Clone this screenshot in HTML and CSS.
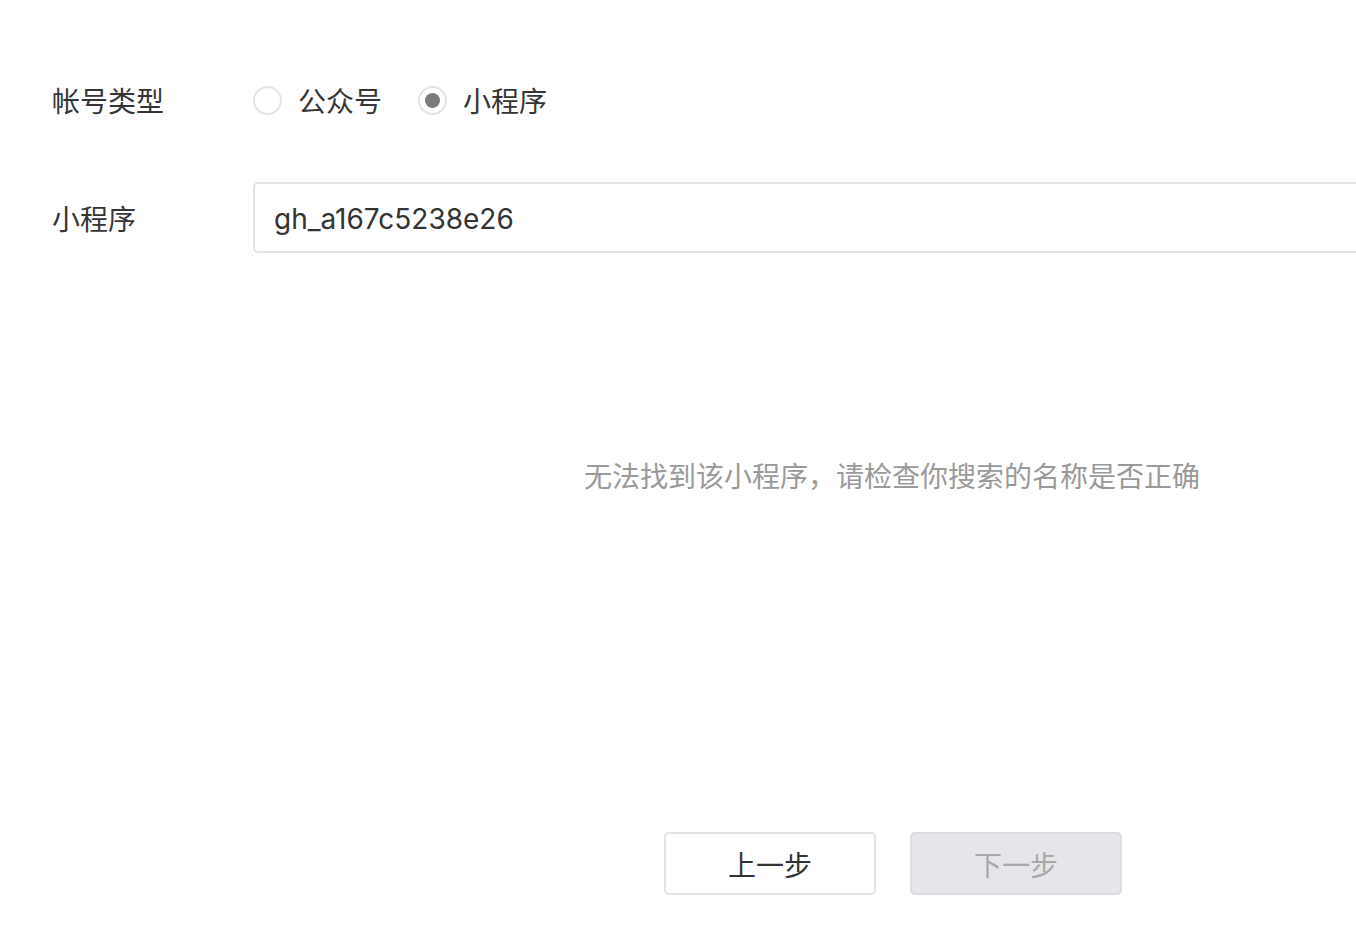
FILE: index.html
```html
<!DOCTYPE html>
<html lang="zh-CN">
<head>
<meta charset="utf-8">
<title>小程序</title>
<link rel="stylesheet" href="styles.css">
</head>
<body>
<div class="page">
  <div class="row row-type">
    <div class="label">帐号类型</div>
    <div class="radios">
      <label class="radio"><span class="dot"></span><span class="rtext">公众号</span></label>
      <label class="radio checked"><span class="dot"></span><span class="rtext">小程序</span></label>
    </div>
  </div>
  <div class="row row-input">
    <div class="label">小程序</div>
    <div class="input">gh_a167c5238e26</div>
  </div>
  <div class="empty">无法找到该小程序，请检查你搜索的名称是否正确</div>
  <div class="actions">
    <button class="btn">上一步</button>
    <button class="btn disabled">下一步</button>
  </div>
</div>
</body>
</html>
```
FILE: styles.css
```css
html, body {
  margin: 0;
  padding: 0;
  background: #fff;
}
body {
  font-family: "Noto Sans CJK SC", "Inter", "Noto Sans", sans-serif;
  color: #353535;
  width: 1356px;
  height: 942px;
  overflow: hidden;
}
.page {
  padding-left: 52px;
  overflow: hidden;
  height: 942px;
}
.row {
  display: flex;
  align-items: center;
}
.label {
  width: 201px;
  font-size: 28px;
  line-height: 40px;
  flex: none;
}
.row-type {
  padding-top: 80px;
  height: 40px;
}
.radios {
  display: flex;
  align-items: center;
  gap: 36px;
}
.radio {
  display: flex;
  align-items: center;
  gap: 16px;
  font-size: 28px;
  line-height: 40px;
}
.dot {
  box-sizing: border-box;
  width: 29px;
  height: 29px;
  border-radius: 50%;
  border: 2px solid #e4e4e6;
  background: #fff;
  display: flex;
  align-items: center;
  justify-content: center;
}
.checked .dot::after {
  content: "";
  width: 15px;
  height: 15px;
  border-radius: 50%;
  background: #7b7b7b;
}
.row-input {
  margin-top: 62px;
}
.input {
  box-sizing: border-box;
  flex: none;
  width: 1200px;
  height: 71px;
  border: 2px solid #e2e5ea;
  border-radius: 5px;
  padding-left: 19px;
  padding-top: 2px;
  font-family: "Inter", "Noto Sans", sans-serif;
  font-size: 28px;
  display: flex;
  align-items: center;
  color: #333;
}
.empty {
  margin-top: 202px;
  padding-left: 532px;
  font-size: 28px;
  line-height: 40px;
  color: #9a9a9a;
}
.actions {
  margin-top: 337px;
  padding-left: 612px;
  display: flex;
  gap: 34px;
}
.btn {
  box-sizing: border-box;
  width: 212px;
  height: 63px;
  border: 2px solid #e3e3e6;
  border-radius: 5px;
  background: #fff;
  font-family: "Noto Sans CJK SC", sans-serif;
  font-size: 28px;
  color: #333;
  padding: 0;
  cursor: pointer;
}
.btn.disabled {
  background: #e6e6ea;
  border-color: #dcdce0;
  color: #a8a8a8;
  cursor: default;
}
```
